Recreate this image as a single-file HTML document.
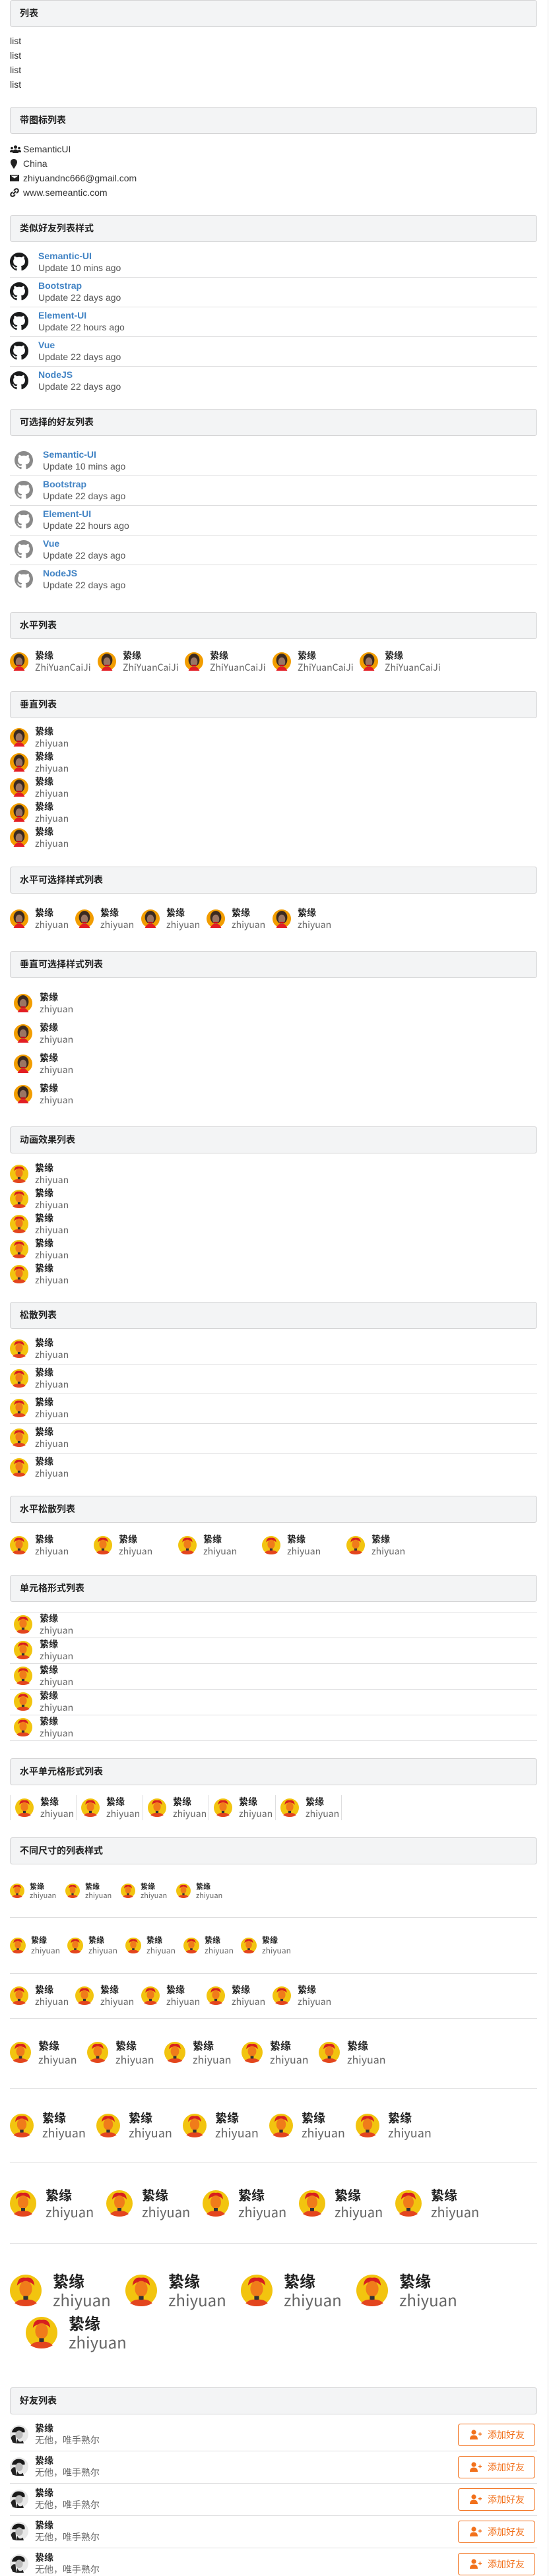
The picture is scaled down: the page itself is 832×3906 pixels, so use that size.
<!DOCTYPE html>
<html><head><meta charset="utf-8">
<style>
*{margin:0;padding:0;box-sizing:border-box}
html,body{width:832px;height:3906px;background:#fff;overflow:hidden}
body{position:relative;font-family:"Liberation Sans","Noto Sans CJK SC",sans-serif;color:rgba(0,0,0,.87);font-size:14px}
.h{position:absolute;left:15px;width:799px;height:41px;border:1px solid #d4d4d5;border-radius:4px;background:#f3f4f5;padding-left:14px;line-height:39px;font-weight:bold;font-size:14px;color:#222;font-family:"Noto Sans CJK SC","Liberation Sans",sans-serif}
.l{position:absolute;line-height:20px;font-size:14px;color:#333}
.sep{position:absolute;left:15px;width:799px;height:1px;background:#dededf}
.i{position:absolute;height:0;white-space:nowrap}
.i svg.a{position:absolute;left:0}
.t{position:absolute;line-height:1.3;top:-1.3em;font-family:"Noto Sans CJK SC","Liberation Sans",sans-serif}
.t b{display:block;color:#222;font-weight:bold}
.t span{display:block;color:#666}
.g{position:absolute;height:0;white-space:nowrap}
.g svg{position:absolute;top:-14px}
.g .tt{position:absolute;top:-18px;line-height:18px;font-size:14px}
.g .tt b{display:block;color:#4183c4;font-weight:bold}
.g .tt span{display:block;color:#555}
.cell{position:absolute;top:2722px;height:38px;width:101px;border-left:1px solid #dededf}
.btn{position:absolute;left:694px;width:117px;height:34px;border:1px solid #f2711c;border-radius:4px;color:#f2711c;font-size:14px;line-height:32px;padding-left:44px;font-family:"Noto Sans CJK SC",sans-serif}
.btn svg{position:absolute;left:17px;top:8px}
</style></head><body>
<svg width="0" height="0" style="position:absolute">
<defs>
<symbol id="p" viewBox="0 0 40 40"><circle cx="20" cy="20" r="20" fill="#f29d00"/><ellipse cx="20" cy="17" rx="12" ry="14" fill="#3b2a20"/><ellipse cx="20" cy="21" rx="7.5" ry="10" fill="#9a7563"/><path d="M8 40 Q12 30 20 31 Q28 30 32 40Z" fill="#e31e24"/><rect x="15" y="27" width="10" height="3" fill="#c81018"/></symbol>
<symbol id="c" viewBox="0 0 40 40"><circle cx="20" cy="20" r="20" fill="#f2c40f"/><path d="M9 14 Q10 2 20 4 Q30 2 31 14 Q26 8 20 10 Q14 8 9 14Z" fill="#d71f1f"/><ellipse cx="20" cy="18" rx="8" ry="10" fill="#f07c1a"/><rect x="17" y="27" width="6" height="5" fill="#333"/><path d="M6 36 Q12 30 20 32 Q28 30 34 36 Q28 40 20 40 Q12 40 6 36Z" fill="#e3451e"/></symbol>
<symbol id="bw" viewBox="0 0 40 40"><circle cx="20" cy="20" r="20" fill="#e8e8e8"/><path d="M4 16 Q8 2 22 4 Q34 6 32 16Z" fill="#1a1a1a"/><ellipse cx="20" cy="21" rx="8" ry="9" fill="#bbb"/><path d="M2 28 Q6 20 12 22 L14 40 L6 38Z M16 30 Q20 40 28 34 L30 40 L14 40Z" fill="#222"/></symbol>
<symbol id="gh" viewBox="0 0 16 16"><path d="M8 0C3.58 0 0 3.58 0 8c0 3.540 2.29 6.53 5.47 7.59.4.07.55-.17.55-.38 0-.19-.01-.82-.01-1.49-2.01.37-2.53-.49-2.69-.94-.09-.23-.48-.94-.82-1.13-.28-.15-.68-.52-.01-.53.63-.01 1.080.58 1.23.82.72 1.21 1.87.87 2.33.66.07-.52.28-.87.51-1.07-1.78-.2-3.64-.89-3.64-3.95 0-.87.31-1.59.82-2.15-.08-.2-.36-1.02.08-2.12 0 0 .67-.21 2.2.82.64-.18 1.32-.27 2-.27.68 0 1.36.09 2 .27 1.53-1.04 2.2-.82 2.2-.82.44 1.1.16 1.92.08 2.12.51.56.82 1.27.82 2.15 0 3.07-1.87 3.75-3.65 3.95.29.25.54.73.54 1.48 0 1.07-.01 1.93-.01 2.2 0 .21.15.46.55.38A8.013 8.013 0 0016 8c0-4.42-3.58-8-8-8z"/></symbol>
</defs></svg>
<div style="position:absolute;left:830px;top:0;width:1px;height:3906px;background:#e5e5e5"></div>

<div class="h" style="top:0">列表</div>
<div class="l" style="left:15px;top:52px">list</div>
<div class="l" style="left:15px;top:74px">list</div>
<div class="l" style="left:15px;top:96px">list</div>
<div class="l" style="left:15px;top:118px">list</div>

<div class="h" style="top:162px">带图标列表</div>
<svg style="position:absolute;left:15px;top:220px" width="17" height="12" viewBox="0 0 17 12" fill="#222"><circle cx="8.5" cy="3" r="2.6"/><path d="M4 12 Q4 6.5 8.5 6.5 Q13 6.5 13 12Z"/><circle cx="3" cy="4.5" r="1.8"/><path d="M0 11 Q0 7 3 7 Q4.5 7 5 8 L4 11Z"/><circle cx="14" cy="4.5" r="1.8"/><path d="M17 11 Q17 7 14 7 Q12.5 7 12 8 L13 11Z"/></svg>
<div class="l" style="left:35px;top:216px">SemanticUI</div>
<svg style="position:absolute;left:16px;top:241px" width="10" height="15" viewBox="0 0 10 15" fill="#222"><path d="M5 0 C2 0 0 2.2 0 5 C0 8 5 15 5 15 C5 15 10 8 10 5 C10 2.2 8 0 5 0Z"/></svg>
<div class="l" style="left:35px;top:238px">China</div>
<svg style="position:absolute;left:15px;top:265px" width="14" height="10" viewBox="0 0 14 10" fill="#222"><path d="M0 0H14V10H0Z M1.5 1.5 L7 5.5 L12.5 1.5Z" fill-rule="evenodd"/></svg>
<div class="l" style="left:35px;top:260px">zhiyuandnc666@gmail.com</div>
<svg style="position:absolute;left:15px;top:285px" width="14" height="14" viewBox="0 0 14 14" fill="none" stroke="#222" stroke-width="2"><path d="M6 4 L8 2 Q10 0.5 12 2 Q13.5 4 12 6 L10 8"/><path d="M8 10 L6 12 Q4 13.5 2 12 Q0.5 10 2 8 L4 6"/><path d="M5 9 L9 5"/></svg>
<div class="l" style="left:35px;top:282px">www.semeantic.com</div>

<div class="h" style="top:326px">类似好友列表样式</div>
<div class="g" style="left:15px;top:397px"><svg width="28" height="28" fill="#1b1c1d"><use href="#gh"/></svg><div class="tt" style="left:43px"><b>Semantic-UI</b><span>Update 10 mins ago</span></div></div>
<div class="sep" style="top:420px"></div>
<div class="g" style="left:15px;top:442px"><svg width="28" height="28" fill="#1b1c1d"><use href="#gh"/></svg><div class="tt" style="left:43px"><b>Bootstrap</b><span>Update 22 days ago</span></div></div>
<div class="sep" style="top:465px"></div>
<div class="g" style="left:15px;top:487px"><svg width="28" height="28" fill="#1b1c1d"><use href="#gh"/></svg><div class="tt" style="left:43px"><b>Element-UI</b><span>Update 22 hours ago</span></div></div>
<div class="sep" style="top:510px"></div>
<div class="g" style="left:15px;top:532px"><svg width="28" height="28" fill="#1b1c1d"><use href="#gh"/></svg><div class="tt" style="left:43px"><b>Vue</b><span>Update 22 days ago</span></div></div>
<div class="sep" style="top:555px"></div>
<div class="g" style="left:15px;top:577px"><svg width="28" height="28" fill="#1b1c1d"><use href="#gh"/></svg><div class="tt" style="left:43px"><b>NodeJS</b><span>Update 22 days ago</span></div></div>

<div class="h" style="top:620px">可选择的好友列表</div>
<div class="g" style="left:22px;top:698px"><svg width="28" height="28" fill="#8a8a8a"><use href="#gh"/></svg><div class="tt" style="left:43px"><b>Semantic-UI</b><span>Update 10 mins ago</span></div></div>
<div class="sep" style="top:721px"></div>
<div class="g" style="left:22px;top:743px"><svg width="28" height="28" fill="#8a8a8a"><use href="#gh"/></svg><div class="tt" style="left:43px"><b>Bootstrap</b><span>Update 22 days ago</span></div></div>
<div class="sep" style="top:766px"></div>
<div class="g" style="left:22px;top:788px"><svg width="28" height="28" fill="#8a8a8a"><use href="#gh"/></svg><div class="tt" style="left:43px"><b>Element-UI</b><span>Update 22 hours ago</span></div></div>
<div class="sep" style="top:811px"></div>
<div class="g" style="left:22px;top:833px"><svg width="28" height="28" fill="#8a8a8a"><use href="#gh"/></svg><div class="tt" style="left:43px"><b>Vue</b><span>Update 22 days ago</span></div></div>
<div class="sep" style="top:856px"></div>
<div class="g" style="left:22px;top:878px"><svg width="28" height="28" fill="#8a8a8a"><use href="#gh"/></svg><div class="tt" style="left:43px"><b>NodeJS</b><span>Update 22 days ago</span></div></div>

<div class="h" style="top:928px">水平列表</div>
<div class="i" style="left:15px;top:1003px;font-size:14px"><svg class="a" width="28" height="28" style="top:-14px"><use href="#p"/></svg><div class="t" style="left:38px"><b>絷缘</b><span>ZhiYuanCaiJi</span></div></div>
<div class="i" style="left:148px;top:1003px;font-size:14px"><svg class="a" width="28" height="28" style="top:-14px"><use href="#p"/></svg><div class="t" style="left:38px"><b>絷缘</b><span>ZhiYuanCaiJi</span></div></div>
<div class="i" style="left:280px;top:1003px;font-size:14px"><svg class="a" width="28" height="28" style="top:-14px"><use href="#p"/></svg><div class="t" style="left:38px"><b>絷缘</b><span>ZhiYuanCaiJi</span></div></div>
<div class="i" style="left:413px;top:1003px;font-size:14px"><svg class="a" width="28" height="28" style="top:-14px"><use href="#p"/></svg><div class="t" style="left:38px"><b>絷缘</b><span>ZhiYuanCaiJi</span></div></div>
<div class="i" style="left:545px;top:1003px;font-size:14px"><svg class="a" width="28" height="28" style="top:-14px"><use href="#p"/></svg><div class="t" style="left:38px"><b>絷缘</b><span>ZhiYuanCaiJi</span></div></div>

<div class="h" style="top:1048px">垂直列表</div>
<div class="i" style="left:15px;top:1118px;font-size:14px"><svg class="a" width="28" height="28" style="top:-14px"><use href="#p"/></svg><div class="t" style="left:38px"><b>絷缘</b><span>zhiyuan</span></div></div>
<div class="i" style="left:15px;top:1156px;font-size:14px"><svg class="a" width="28" height="28" style="top:-14px"><use href="#p"/></svg><div class="t" style="left:38px"><b>絷缘</b><span>zhiyuan</span></div></div>
<div class="i" style="left:15px;top:1194px;font-size:14px"><svg class="a" width="28" height="28" style="top:-14px"><use href="#p"/></svg><div class="t" style="left:38px"><b>絷缘</b><span>zhiyuan</span></div></div>
<div class="i" style="left:15px;top:1232px;font-size:14px"><svg class="a" width="28" height="28" style="top:-14px"><use href="#p"/></svg><div class="t" style="left:38px"><b>絷缘</b><span>zhiyuan</span></div></div>
<div class="i" style="left:15px;top:1270px;font-size:14px"><svg class="a" width="28" height="28" style="top:-14px"><use href="#p"/></svg><div class="t" style="left:38px"><b>絷缘</b><span>zhiyuan</span></div></div>

<div class="h" style="top:1314px">水平可选择样式列表</div>
<div class="i" style="left:15px;top:1393px;font-size:14px"><svg class="a" width="28" height="28" style="top:-14px"><use href="#p"/></svg><div class="t" style="left:38px"><b>絷缘</b><span>zhiyuan</span></div></div>
<div class="i" style="left:114px;top:1393px;font-size:14px"><svg class="a" width="28" height="28" style="top:-14px"><use href="#p"/></svg><div class="t" style="left:38px"><b>絷缘</b><span>zhiyuan</span></div></div>
<div class="i" style="left:214px;top:1393px;font-size:14px"><svg class="a" width="28" height="28" style="top:-14px"><use href="#p"/></svg><div class="t" style="left:38px"><b>絷缘</b><span>zhiyuan</span></div></div>
<div class="i" style="left:313px;top:1393px;font-size:14px"><svg class="a" width="28" height="28" style="top:-14px"><use href="#p"/></svg><div class="t" style="left:38px"><b>絷缘</b><span>zhiyuan</span></div></div>
<div class="i" style="left:413px;top:1393px;font-size:14px"><svg class="a" width="28" height="28" style="top:-14px"><use href="#p"/></svg><div class="t" style="left:38px"><b>絷缘</b><span>zhiyuan</span></div></div>

<div class="h" style="top:1442px">垂直可选择样式列表</div>
<div class="i" style="left:21px;top:1521px;font-size:14px"><svg class="a" width="28" height="28" style="top:-14px"><use href="#p"/></svg><div class="t" style="left:39px"><b>絷缘</b><span>zhiyuan</span></div></div>
<div class="i" style="left:21px;top:1567px;font-size:14px"><svg class="a" width="28" height="28" style="top:-14px"><use href="#p"/></svg><div class="t" style="left:39px"><b>絷缘</b><span>zhiyuan</span></div></div>
<div class="i" style="left:21px;top:1613px;font-size:14px"><svg class="a" width="28" height="28" style="top:-14px"><use href="#p"/></svg><div class="t" style="left:39px"><b>絷缘</b><span>zhiyuan</span></div></div>
<div class="i" style="left:21px;top:1659px;font-size:14px"><svg class="a" width="28" height="28" style="top:-14px"><use href="#p"/></svg><div class="t" style="left:39px"><b>絷缘</b><span>zhiyuan</span></div></div>

<div class="h" style="top:1708px">动画效果列表</div>
<div class="i" style="left:15px;top:1780px;font-size:14px"><svg class="a" width="28" height="28" style="top:-14px"><use href="#c"/></svg><div class="t" style="left:38px"><b>絷缘</b><span>zhiyuan</span></div></div>
<div class="i" style="left:15px;top:1818px;font-size:14px"><svg class="a" width="28" height="28" style="top:-14px"><use href="#c"/></svg><div class="t" style="left:38px"><b>絷缘</b><span>zhiyuan</span></div></div>
<div class="i" style="left:15px;top:1856px;font-size:14px"><svg class="a" width="28" height="28" style="top:-14px"><use href="#c"/></svg><div class="t" style="left:38px"><b>絷缘</b><span>zhiyuan</span></div></div>
<div class="i" style="left:15px;top:1894px;font-size:14px"><svg class="a" width="28" height="28" style="top:-14px"><use href="#c"/></svg><div class="t" style="left:38px"><b>絷缘</b><span>zhiyuan</span></div></div>
<div class="i" style="left:15px;top:1932px;font-size:14px"><svg class="a" width="28" height="28" style="top:-14px"><use href="#c"/></svg><div class="t" style="left:38px"><b>絷缘</b><span>zhiyuan</span></div></div>

<div class="h" style="top:1974px">松散列表</div>
<div class="i" style="left:15px;top:2045px;font-size:14px"><svg class="a" width="28" height="28" style="top:-14px"><use href="#c"/></svg><div class="t" style="left:38px"><b>絷缘</b><span>zhiyuan</span></div></div>
<div class="sep" style="top:2068px"></div>
<div class="i" style="left:15px;top:2090px;font-size:14px"><svg class="a" width="28" height="28" style="top:-14px"><use href="#c"/></svg><div class="t" style="left:38px"><b>絷缘</b><span>zhiyuan</span></div></div>
<div class="sep" style="top:2113px"></div>
<div class="i" style="left:15px;top:2135px;font-size:14px"><svg class="a" width="28" height="28" style="top:-14px"><use href="#c"/></svg><div class="t" style="left:38px"><b>絷缘</b><span>zhiyuan</span></div></div>
<div class="sep" style="top:2158px"></div>
<div class="i" style="left:15px;top:2180px;font-size:14px"><svg class="a" width="28" height="28" style="top:-14px"><use href="#c"/></svg><div class="t" style="left:38px"><b>絷缘</b><span>zhiyuan</span></div></div>
<div class="sep" style="top:2203px"></div>
<div class="i" style="left:15px;top:2225px;font-size:14px"><svg class="a" width="28" height="28" style="top:-14px"><use href="#c"/></svg><div class="t" style="left:38px"><b>絷缘</b><span>zhiyuan</span></div></div>

<div class="h" style="top:2268px">水平松散列表</div>
<div class="i" style="left:15px;top:2343px;font-size:14px"><svg class="a" width="28" height="28" style="top:-14px"><use href="#c"/></svg><div class="t" style="left:38px"><b>絷缘</b><span>zhiyuan</span></div></div>
<div class="i" style="left:142px;top:2343px;font-size:14px"><svg class="a" width="28" height="28" style="top:-14px"><use href="#c"/></svg><div class="t" style="left:38px"><b>絷缘</b><span>zhiyuan</span></div></div>
<div class="i" style="left:270px;top:2343px;font-size:14px"><svg class="a" width="28" height="28" style="top:-14px"><use href="#c"/></svg><div class="t" style="left:38px"><b>絷缘</b><span>zhiyuan</span></div></div>
<div class="i" style="left:397px;top:2343px;font-size:14px"><svg class="a" width="28" height="28" style="top:-14px"><use href="#c"/></svg><div class="t" style="left:38px"><b>絷缘</b><span>zhiyuan</span></div></div>
<div class="i" style="left:525px;top:2343px;font-size:14px"><svg class="a" width="28" height="28" style="top:-14px"><use href="#c"/></svg><div class="t" style="left:38px"><b>絷缘</b><span>zhiyuan</span></div></div>

<div class="h" style="top:2388px">单元格形式列表</div>
<div class="sep" style="top:2444px"></div>
<div class="i" style="left:21px;top:2463px;font-size:14px"><svg class="a" width="28" height="28" style="top:-14px"><use href="#c"/></svg><div class="t" style="left:39px"><b>絷缘</b><span>zhiyuan</span></div></div>
<div class="sep" style="top:2483px"></div>
<div class="i" style="left:21px;top:2502px;font-size:14px"><svg class="a" width="28" height="28" style="top:-14px"><use href="#c"/></svg><div class="t" style="left:39px"><b>絷缘</b><span>zhiyuan</span></div></div>
<div class="sep" style="top:2522px"></div>
<div class="i" style="left:21px;top:2541px;font-size:14px"><svg class="a" width="28" height="28" style="top:-14px"><use href="#c"/></svg><div class="t" style="left:39px"><b>絷缘</b><span>zhiyuan</span></div></div>
<div class="sep" style="top:2561px"></div>
<div class="i" style="left:21px;top:2580px;font-size:14px"><svg class="a" width="28" height="28" style="top:-14px"><use href="#c"/></svg><div class="t" style="left:39px"><b>絷缘</b><span>zhiyuan</span></div></div>
<div class="sep" style="top:2600px"></div>
<div class="i" style="left:21px;top:2619px;font-size:14px"><svg class="a" width="28" height="28" style="top:-14px"><use href="#c"/></svg><div class="t" style="left:39px"><b>絷缘</b><span>zhiyuan</span></div></div>
<div class="sep" style="top:2639px"></div>

<div class="h" style="top:2666px">水平单元格形式列表</div>
<div class="cell" style="left:15px"></div><div class="cell" style="left:115px"></div><div class="cell" style="left:216px"></div><div class="cell" style="left:316px"></div><div class="cell" style="left:417px;border-right:1px solid #dededf"></div>
<div class="i" style="left:23px;top:2741px;font-size:14px"><svg class="a" width="28" height="28" style="top:-14px"><use href="#c"/></svg><div class="t" style="left:38px"><b>絷缘</b><span>zhiyuan</span></div></div>
<div class="i" style="left:123px;top:2741px;font-size:14px"><svg class="a" width="28" height="28" style="top:-14px"><use href="#c"/></svg><div class="t" style="left:38px"><b>絷缘</b><span>zhiyuan</span></div></div>
<div class="i" style="left:224px;top:2741px;font-size:14px"><svg class="a" width="28" height="28" style="top:-14px"><use href="#c"/></svg><div class="t" style="left:38px"><b>絷缘</b><span>zhiyuan</span></div></div>
<div class="i" style="left:324px;top:2741px;font-size:14px"><svg class="a" width="28" height="28" style="top:-14px"><use href="#c"/></svg><div class="t" style="left:38px"><b>絷缘</b><span>zhiyuan</span></div></div>
<div class="i" style="left:425px;top:2741px;font-size:14px"><svg class="a" width="28" height="28" style="top:-14px"><use href="#c"/></svg><div class="t" style="left:38px"><b>絷缘</b><span>zhiyuan</span></div></div>

<div class="h" style="top:2786px">不同尺寸的列表样式</div>
<div class="i" style="left:15px;top:2867px;font-size:11px"><svg class="a" width="22" height="22" style="top:-11px"><use href="#c"/></svg><div class="t" style="left:30px"><b>絷缘</b><span>zhiyuan</span></div></div>
<div class="i" style="left:99px;top:2867px;font-size:11px"><svg class="a" width="22" height="22" style="top:-11px"><use href="#c"/></svg><div class="t" style="left:30px"><b>絷缘</b><span>zhiyuan</span></div></div>
<div class="i" style="left:183px;top:2867px;font-size:11px"><svg class="a" width="22" height="22" style="top:-11px"><use href="#c"/></svg><div class="t" style="left:30px"><b>絷缘</b><span>zhiyuan</span></div></div>
<div class="i" style="left:267px;top:2867px;font-size:11px"><svg class="a" width="22" height="22" style="top:-11px"><use href="#c"/></svg><div class="t" style="left:30px"><b>絷缘</b><span>zhiyuan</span></div></div>
<div class="sep" style="top:2907px"></div>
<div class="i" style="left:15px;top:2950px;font-size:12px"><svg class="a" width="24" height="24" style="top:-12px"><use href="#c"/></svg><div class="t" style="left:32px"><b>絷缘</b><span>zhiyuan</span></div></div>
<div class="i" style="left:102px;top:2950px;font-size:12px"><svg class="a" width="24" height="24" style="top:-12px"><use href="#c"/></svg><div class="t" style="left:32px"><b>絷缘</b><span>zhiyuan</span></div></div>
<div class="i" style="left:190px;top:2950px;font-size:12px"><svg class="a" width="24" height="24" style="top:-12px"><use href="#c"/></svg><div class="t" style="left:32px"><b>絷缘</b><span>zhiyuan</span></div></div>
<div class="i" style="left:278px;top:2950px;font-size:12px"><svg class="a" width="24" height="24" style="top:-12px"><use href="#c"/></svg><div class="t" style="left:32px"><b>絷缘</b><span>zhiyuan</span></div></div>
<div class="i" style="left:365px;top:2950px;font-size:12px"><svg class="a" width="24" height="24" style="top:-12px"><use href="#c"/></svg><div class="t" style="left:32px"><b>絷缘</b><span>zhiyuan</span></div></div>
<div class="sep" style="top:2992px"></div>
<div class="i" style="left:15px;top:3026px;font-size:14px"><svg class="a" width="28" height="28" style="top:-14px"><use href="#c"/></svg><div class="t" style="left:38px"><b>絷缘</b><span>zhiyuan</span></div></div>
<div class="i" style="left:114px;top:3026px;font-size:14px"><svg class="a" width="28" height="28" style="top:-14px"><use href="#c"/></svg><div class="t" style="left:38px"><b>絷缘</b><span>zhiyuan</span></div></div>
<div class="i" style="left:214px;top:3026px;font-size:14px"><svg class="a" width="28" height="28" style="top:-14px"><use href="#c"/></svg><div class="t" style="left:38px"><b>絷缘</b><span>zhiyuan</span></div></div>
<div class="i" style="left:313px;top:3026px;font-size:14px"><svg class="a" width="28" height="28" style="top:-14px"><use href="#c"/></svg><div class="t" style="left:38px"><b>絷缘</b><span>zhiyuan</span></div></div>
<div class="i" style="left:413px;top:3026px;font-size:14px"><svg class="a" width="28" height="28" style="top:-14px"><use href="#c"/></svg><div class="t" style="left:38px"><b>絷缘</b><span>zhiyuan</span></div></div>
<div class="sep" style="top:3060px"></div>
<div class="i" style="left:15px;top:3112px;font-size:16px"><svg class="a" width="32" height="32" style="top:-16px"><use href="#c"/></svg><div class="t" style="left:43px"><b>絷缘</b><span>zhiyuan</span></div></div>
<div class="i" style="left:132px;top:3112px;font-size:16px"><svg class="a" width="32" height="32" style="top:-16px"><use href="#c"/></svg><div class="t" style="left:43px"><b>絷缘</b><span>zhiyuan</span></div></div>
<div class="i" style="left:249px;top:3112px;font-size:16px"><svg class="a" width="32" height="32" style="top:-16px"><use href="#c"/></svg><div class="t" style="left:43px"><b>絷缘</b><span>zhiyuan</span></div></div>
<div class="i" style="left:366px;top:3112px;font-size:16px"><svg class="a" width="32" height="32" style="top:-16px"><use href="#c"/></svg><div class="t" style="left:43px"><b>絷缘</b><span>zhiyuan</span></div></div>
<div class="i" style="left:483px;top:3112px;font-size:16px"><svg class="a" width="32" height="32" style="top:-16px"><use href="#c"/></svg><div class="t" style="left:43px"><b>絷缘</b><span>zhiyuan</span></div></div>
<div class="sep" style="top:3166px"></div>
<div class="i" style="left:15px;top:3223px;font-size:18px"><svg class="a" width="36" height="36" style="top:-18px"><use href="#c"/></svg><div class="t" style="left:49px"><b>絷缘</b><span>zhiyuan</span></div></div>
<div class="i" style="left:146px;top:3223px;font-size:18px"><svg class="a" width="36" height="36" style="top:-18px"><use href="#c"/></svg><div class="t" style="left:49px"><b>絷缘</b><span>zhiyuan</span></div></div>
<div class="i" style="left:277px;top:3223px;font-size:18px"><svg class="a" width="36" height="36" style="top:-18px"><use href="#c"/></svg><div class="t" style="left:49px"><b>絷缘</b><span>zhiyuan</span></div></div>
<div class="i" style="left:408px;top:3223px;font-size:18px"><svg class="a" width="36" height="36" style="top:-18px"><use href="#c"/></svg><div class="t" style="left:49px"><b>絷缘</b><span>zhiyuan</span></div></div>
<div class="i" style="left:539px;top:3223px;font-size:18px"><svg class="a" width="36" height="36" style="top:-18px"><use href="#c"/></svg><div class="t" style="left:49px"><b>絷缘</b><span>zhiyuan</span></div></div>
<div class="sep" style="top:3278px"></div>
<div class="i" style="left:15px;top:3341px;font-size:20px"><svg class="a" width="40" height="40" style="top:-20px"><use href="#c"/></svg><div class="t" style="left:54px"><b>絷缘</b><span>zhiyuan</span></div></div>
<div class="i" style="left:161px;top:3341px;font-size:20px"><svg class="a" width="40" height="40" style="top:-20px"><use href="#c"/></svg><div class="t" style="left:54px"><b>絷缘</b><span>zhiyuan</span></div></div>
<div class="i" style="left:307px;top:3341px;font-size:20px"><svg class="a" width="40" height="40" style="top:-20px"><use href="#c"/></svg><div class="t" style="left:54px"><b>絷缘</b><span>zhiyuan</span></div></div>
<div class="i" style="left:453px;top:3341px;font-size:20px"><svg class="a" width="40" height="40" style="top:-20px"><use href="#c"/></svg><div class="t" style="left:54px"><b>絷缘</b><span>zhiyuan</span></div></div>
<div class="i" style="left:599px;top:3341px;font-size:20px"><svg class="a" width="40" height="40" style="top:-20px"><use href="#c"/></svg><div class="t" style="left:54px"><b>絷缘</b><span>zhiyuan</span></div></div>
<div class="sep" style="top:3401px"></div>
<div class="i" style="left:15px;top:3473px;font-size:24px"><svg class="a" width="48" height="48" style="top:-24px"><use href="#c"/></svg><div class="t" style="left:65px;line-height:1.2;top:-1.2em"><b>絷缘</b><span>zhiyuan</span></div></div>
<div class="i" style="left:190px;top:3473px;font-size:24px"><svg class="a" width="48" height="48" style="top:-24px"><use href="#c"/></svg><div class="t" style="left:65px;line-height:1.2;top:-1.2em"><b>絷缘</b><span>zhiyuan</span></div></div>
<div class="i" style="left:365px;top:3473px;font-size:24px"><svg class="a" width="48" height="48" style="top:-24px"><use href="#c"/></svg><div class="t" style="left:65px;line-height:1.2;top:-1.2em"><b>絷缘</b><span>zhiyuan</span></div></div>
<div class="i" style="left:540px;top:3473px;font-size:24px"><svg class="a" width="48" height="48" style="top:-24px"><use href="#c"/></svg><div class="t" style="left:65px;line-height:1.2;top:-1.2em"><b>絷缘</b><span>zhiyuan</span></div></div>
<div class="i" style="left:39px;top:3537px;font-size:24px"><svg class="a" width="48" height="48" style="top:-24px"><use href="#c"/></svg><div class="t" style="left:65px;line-height:1.2;top:-1.2em"><b>絷缘</b><span>zhiyuan</span></div></div>

<div class="h" style="top:3620px">好友列表</div>
<div class="i" style="left:15px;top:3691px;font-size:14px"><svg class="a" width="28" height="28" style="top:-14px"><use href="#bw"/></svg><div class="t" style="left:38px"><b>絷缘</b><span>无他，唯手熟尔</span></div></div>
<div class="btn" style="top:3675px"><svg width="18" height="15" viewBox="0 0 18 15" fill="#f2711c"><circle cx="6" cy="4" r="3.6"/><path d="M0 15 Q0 8.5 6 8.5 Q12 8.5 12 15Z"/><path d="M13 6h5v1.6h-5z M14.7 4.3h1.6v5h-1.6z"/></svg>添加好友</div>
<div class="sep" style="top:3716px"></div>
<div class="i" style="left:15px;top:3740px;font-size:14px"><svg class="a" width="28" height="28" style="top:-14px"><use href="#bw"/></svg><div class="t" style="left:38px"><b>絷缘</b><span>无他，唯手熟尔</span></div></div>
<div class="btn" style="top:3724px"><svg width="18" height="15" viewBox="0 0 18 15" fill="#f2711c"><circle cx="6" cy="4" r="3.6"/><path d="M0 15 Q0 8.5 6 8.5 Q12 8.5 12 15Z"/><path d="M13 6h5v1.6h-5z M14.7 4.3h1.6v5h-1.6z"/></svg>添加好友</div>
<div class="sep" style="top:3765px"></div>
<div class="i" style="left:15px;top:3789px;font-size:14px"><svg class="a" width="28" height="28" style="top:-14px"><use href="#bw"/></svg><div class="t" style="left:38px"><b>絷缘</b><span>无他，唯手熟尔</span></div></div>
<div class="btn" style="top:3773px"><svg width="18" height="15" viewBox="0 0 18 15" fill="#f2711c"><circle cx="6" cy="4" r="3.6"/><path d="M0 15 Q0 8.5 6 8.5 Q12 8.5 12 15Z"/><path d="M13 6h5v1.6h-5z M14.7 4.3h1.6v5h-1.6z"/></svg>添加好友</div>
<div class="sep" style="top:3814px"></div>
<div class="i" style="left:15px;top:3838px;font-size:14px"><svg class="a" width="28" height="28" style="top:-14px"><use href="#bw"/></svg><div class="t" style="left:38px"><b>絷缘</b><span>无他，唯手熟尔</span></div></div>
<div class="btn" style="top:3822px"><svg width="18" height="15" viewBox="0 0 18 15" fill="#f2711c"><circle cx="6" cy="4" r="3.6"/><path d="M0 15 Q0 8.5 6 8.5 Q12 8.5 12 15Z"/><path d="M13 6h5v1.6h-5z M14.7 4.3h1.6v5h-1.6z"/></svg>添加好友</div>
<div class="sep" style="top:3863px"></div>
<div class="i" style="left:15px;top:3887px;font-size:14px"><svg class="a" width="28" height="28" style="top:-14px"><use href="#bw"/></svg><div class="t" style="left:38px"><b>絷缘</b><span>无他，唯手熟尔</span></div></div>
<div class="btn" style="top:3871px"><svg width="18" height="15" viewBox="0 0 18 15" fill="#f2711c"><circle cx="6" cy="4" r="3.6"/><path d="M0 15 Q0 8.5 6 8.5 Q12 8.5 12 15Z"/><path d="M13 6h5v1.6h-5z M14.7 4.3h1.6v5h-1.6z"/></svg>添加好友</div>
</body></html>
